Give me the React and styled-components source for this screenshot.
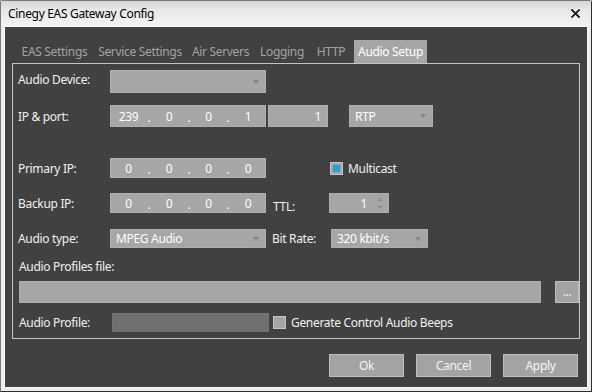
import React from 'react';
import styled, { createGlobalStyle } from 'styled-components';

const Global = createGlobalStyle`
  html, body { margin: 0; padding: 0; background: #ffffff; }
  body {
    font-family: "Noto Sans", "Open Sans", "DejaVu Sans", sans-serif;
    font-size: 12px;
    letter-spacing: -0.32px;
  }
  * { box-sizing: border-box; }
`;

const Window = styled.div`
  width: 592px;
  height: 392px;
  display: flex;
  flex-direction: column;
  background: #ededed;
  border: 1px solid #7a7a7a;
  border-right-color: #2e2e2e;
  border-bottom-color: #2e2e2e;
  border-radius: 2px 2px 0 0;
`;

const TitleBar = styled.div`
  height: 25px;
  flex: none;
  display: flex;
  align-items: center;
  justify-content: space-between;
  padding: 0 10px 0 7px;
  background: linear-gradient(to bottom, #d6d6d6 0%, #e8e8e8 35%, #f3f3f3 100%);
  color: #000;
`;

const Title = styled.span`
  line-height: 16px;
`;

const Frame = styled.div`
  flex: 1;
  display: flex;
  padding: 0 3px 3px 3px;
  background: #eeeeee;
`;

const Body = styled.div`
  flex: 1;
  display: flex;
  flex-direction: column;
  background: #414141;
  border: 1px solid #fafafa;
`;

const TabStrip = styled.div`
  display: flex;
  gap: 4px;
  margin-top: 13px;
  padding-left: 13px;
  height: 23px;
`;

const Tab = styled.div`
  width: ${p => p.$w}px;
  height: 23px;
  display: flex;
  align-items: center;
  justify-content: center;
  white-space: nowrap;
  color: ${p => (p.$active ? '#ffffff' : '#a3a3a3')};
  background: ${p => (p.$active ? '#a6a6a6' : 'transparent')};
`;

const Panel = styled.div`
  margin: 0 7px;
  height: 276px;
  border: 1px solid #c4c4c4;
  padding: 6px 0 6px 5px;
  display: flex;
  flex-direction: column;
`;

const Row = styled.div`
  display: flex;
  align-items: center;
  height: ${p => p.$h}px;
  margin-top: ${p => p.$mt || 0}px;
`;

const Label = styled.span`
  width: ${p => (p.$w ? `${p.$w}px` : 'auto')};
  flex: none;
  margin-left: ${p => p.$ml || 0}px;
  color: #f0f0f0;
  white-space: nowrap;
  position: relative;
  top: ${p => p.$dy || 0}px;
`;

const Field = styled.div`
  width: ${p => p.$w}px;
  height: ${p => p.$h}px;
  flex: none;
  margin-left: ${p => p.$ml || 0}px;
  display: flex;
  align-items: center;
  justify-content: ${p => (p.$right ? 'flex-end' : 'flex-start')};
  padding: 0 ${p => (p.$pr != null ? p.$pr : 5)}px 0 5px;
  background: ${p => (p.$dim ? '#707070' : '#a6a6a6')};
  border: 1px solid ${p => (p.$dim ? '#727272' : '#aeaeae')};
  color: #ffffff;
  white-space: nowrap;
`;

const Arrow = styled.span`
  margin-left: auto;
  width: 0;
  height: 0;
  border-left: 3.5px solid transparent;
  border-right: 3.5px solid transparent;
  border-top: 4px solid #868686;
`;

const IPGrid = styled.div`
  width: 156px;
  height: ${p => p.$h}px;
  flex: none;
  display: grid;
  grid-template-columns: 35px 6px 34px 6px 33px 6px 1fr;
  align-items: center;
  background: #a6a6a6;
  border: 1px solid #aeaeae;
  color: #ffffff;
`;

const Seg = styled.span`
  text-align: center;
`;

const Dot = styled.span`
  text-align: center;
  position: relative;
  top: 1px;
`;

const SpinCol = styled.span`
  display: flex;
  flex-direction: column;
  gap: 5px;
  margin-left: 10px;
`;

const SpinTri = styled.span`
  width: 0;
  height: 0;
  border-left: 3px solid transparent;
  border-right: 3px solid transparent;
  ${p => (p.$up ? 'border-bottom: 3px solid #8c8c8c;' : 'border-top: 3px solid #8c8c8c;')}
`;

const Check = styled.span`
  width: 13px;
  height: 13px;
  flex: none;
  margin-left: ${p => p.$ml || 0}px;
  margin-right: ${p => p.$mr || 0}px;
  display: flex;
  align-items: center;
  justify-content: center;
  background: #a6a6a6;
  border: 1px solid #c6c6c6;
`;

const CheckMark = styled.span`
  width: 7px;
  height: 7px;
  background: #26a0e2;
`;

const Button = styled.div`
  width: ${p => p.$w}px;
  height: ${p => p.$h}px;
  flex: none;
  margin-left: ${p => p.$ml || 0}px;
  display: flex;
  align-items: ${p => (p.$low ? 'flex-end' : 'center')};
  justify-content: center;
  padding-bottom: ${p => (p.$low ? 3 : 0)}px;
  background: #a3a3a3;
  border: 1px solid #bebebe;
  color: #f4f4f4;
  line-height: 14px;
`;

const ButtonRow = styled.div`
  display: flex;
  justify-content: flex-end;
  gap: 12px;
  margin-top: 15px;
  padding-right: 9px;
`;

const CloseIcon = () => (
  <svg width="11" height="11" viewBox="0 0 11 11">
    <path d="M2 2 L9 9 M9 2 L2 9" stroke="#ffffff" strokeWidth="3.6" strokeLinecap="square" />
    <path d="M2 2 L9 9 M9 2 L2 9" stroke="#1a1a1a" strokeWidth="1.9" strokeLinecap="square" />
  </svg>
);

const IP = ({ parts, h }) => (
  <IPGrid $h={h}>
    <Seg>{parts[0]}</Seg>
    <Dot>.</Dot>
    <Seg>{parts[1]}</Seg>
    <Dot>.</Dot>
    <Seg>{parts[2]}</Seg>
    <Dot>.</Dot>
    <Seg>{parts[3]}</Seg>
  </IPGrid>
);

const tabs = [
  { t: 'EAS Settings', w: 73 },
  { t: 'Service Settings', w: 90 },
  { t: 'Air Servers', w: 63 },
  { t: 'Logging', w: 52 },
  { t: 'HTTP', w: 38 },
  { t: 'Audio Setup', w: 73, active: true },
];

export default function App() {
  return (
    <>
      <Global />
      <Window>
        <TitleBar>
          <Title>Cinegy EAS Gateway Config</Title>
          <CloseIcon />
        </TitleBar>
        <Frame>
          <Body>
            <TabStrip>
              {tabs.map(x => (
                <Tab key={x.t} $w={x.w} $active={x.active}>{x.t}</Tab>
              ))}
            </TabStrip>
            <Panel>
              <Row $h={23}>
                <Label $w={92} $dy={-2}>Audio Device:</Label>
                <Field $w={156} $h={23} $pr={6}><Arrow /></Field>
              </Row>
              <Row $h={22} $mt={12}>
                <Label $w={92}>IP &amp; port:</Label>
                <IP parts={['239', '0', '0', '1']} h={22} />
                <Field $w={60} $h={22} $ml={2} $right $pr={6}>1</Field>
                <Field $w={84} $h={22} $ml={21} $pr={6}>RTP<Arrow /></Field>
              </Row>
              <Row $h={20} $mt={31}>
                <Label $w={92}>Primary IP:</Label>
                <IP parts={['0', '0', '0', '0']} h={20} />
                <Check $ml={64} $mr={5}><CheckMark /></Check>
                <Label>Multicast</Label>
              </Row>
              <Row $h={20} $mt={15}>
                <Label $w={92}>Backup IP:</Label>
                <IP parts={['0', '0', '0', '0']} h={20} />
                <Label $w={56} $ml={7} $dy={3}>TTL:</Label>
                <Field $w={60} $h={20} $right $pr={5}>
                  1
                  <SpinCol>
                    <SpinTri $up />
                    <SpinTri />
                  </SpinCol>
                </Field>
              </Row>
              <Row $h={19} $mt={16}>
                <Label $w={92}>Audio type:</Label>
                <Field $w={156} $h={19} $pr={6}>MPEG Audio<Arrow /></Field>
                <Label $w={59} $ml={6}>Bit Rate:</Label>
                <Field $w={97} $h={19} $pr={6}>320 kbit/s<Arrow /></Field>
              </Row>
              <Row $h={16} $mt={10}>
                <Label $ml={1}>Audio Profiles file:</Label>
              </Row>
              <Row $h={22} $mt={7}>
                <Field $w={522} $h={22} $ml={1} />
                <Button $w={24} $h={22} $ml={14} $low>...</Button>
              </Row>
              <Row $h={19} $mt={10}>
                <Label $w={93} $ml={1}>Audio Profile:</Label>
                <Field $w={157} $h={19} $dim />
                <Check $ml={4} $mr={5} />
                <Label>Generate Control Audio Beeps</Label>
              </Row>
            </Panel>
            <ButtonRow>
              <Button $w={75} $h={23}>Ok</Button>
              <Button $w={75} $h={23}>Cancel</Button>
              <Button $w={75} $h={23}>Apply</Button>
            </ButtonRow>
          </Body>
        </Frame>
      </Window>
    </>
  );
}
